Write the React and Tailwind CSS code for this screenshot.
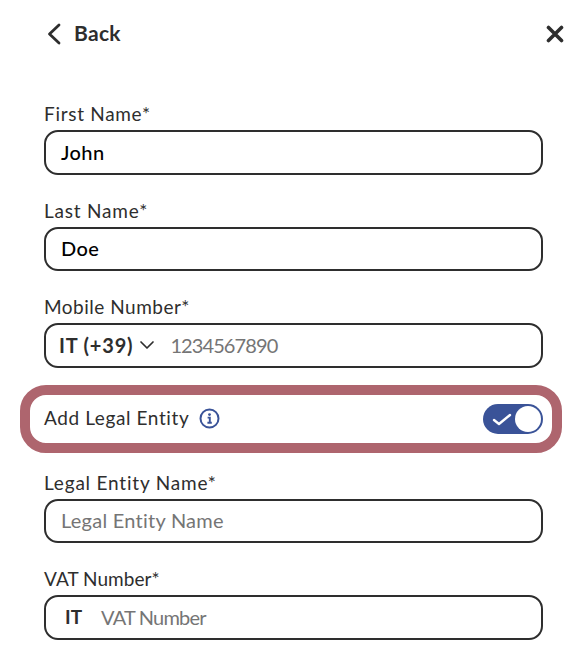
import React from "react";

const font = "font-['Lato','Noto_Sans',sans-serif]";

function Field({ label, spacing, children }) {
  return (
    <div className="flex flex-col">
      <label className={`h-[24px] text-[19px] leading-[24px] text-[#2e2e2e] ${spacing}`}>{label}</label>
      <div className="mt-[4px] flex h-[44.5px] items-center rounded-[14px] border-2 border-[#2e2e2e] bg-white pb-[1px]">
        {children}
      </div>
    </div>
  );
}

export default function App() {
  return (
    <div className={`h-[655px] w-[586px] overflow-hidden bg-white ${font}`}>
      <div className="flex h-[68px] items-center justify-between pl-[46px] pr-[22px]">
        <button className="flex items-center gap-[12px] text-[#2e2e2e]">
          <svg width="16" height="22" viewBox="0 0 16 22" fill="none" stroke="#2e2e2e" strokeWidth="2.8" strokeLinecap="round" strokeLinejoin="round">
            <path d="M13 2 3.5 11 13 20" />
          </svg>
          <span className="pb-[3px] text-[21px] font-bold leading-none tracking-[0.3px]">Back</span>
        </button>
        <svg width="18" height="18" viewBox="0 0 18 18" fill="none" stroke="#2e2e2e" strokeWidth="3.6" strokeLinecap="round">
          <path d="M2.5 2.5l13 13M15.5 2.5l-13 13" />
        </svg>
      </div>
      <div className="flex flex-col pt-[34px]">
        <div className="flex flex-col gap-[24px] pl-[44px] pr-[43px]">
          <Field label="First Name*" spacing="tracking-[0.7px]">
            <span className="pl-[15px] text-[20px] font-medium tracking-[0.4px] text-black">John</span>
          </Field>
          <Field label="Last Name*" spacing="tracking-[0.8px]">
            <span className="pl-[15px] text-[20px] font-medium tracking-[0.4px] text-black">Doe</span>
          </Field>
          <Field label="Mobile Number*" spacing="tracking-[0.5px]">
            <span className="pl-[13px] text-[20px] font-bold tracking-[0.8px] text-[#2e2e2e]">IT (+39)</span>
            <svg className="ml-[6px]" width="16" height="10" viewBox="0 0 16 10" fill="none" stroke="#2e2e2e" strokeWidth="1.7" strokeLinecap="round" strokeLinejoin="round">
              <path d="M2 2l6 6 6-6" />
            </svg>
            <span className="ml-[15px] text-[20px] tracking-[-0.9px] text-[#757575]">1234567890</span>
          </Field>
        </div>
        <div className="ml-[20px] mt-[17px] flex h-[68px] w-[542px] items-center justify-between rounded-[26px] border-[10px] border-[#ae656e] bg-white pl-[14px] pr-[9px]">
          <div className="flex items-center gap-[10px]">
            <span className="text-[19px] tracking-[0.6px] text-[#2e2e2e]">Add Legal Entity</span>
            <svg width="21" height="21" viewBox="0 0 21 21" fill="none">
              <circle cx="10.5" cy="10.5" r="9" stroke="#3a5398" strokeWidth="2" />
              <circle cx="10.5" cy="6.6" r="1.4" fill="#3a5398" />
              <path d="M8.6 9.6h2.2v5M8.4 14.8h4.4" stroke="#3a5398" strokeWidth="1.9" />
            </svg>
          </div>
          <div className="flex h-[30px] w-[60px] items-center justify-between rounded-full bg-[#3a5398] pl-[9px] pr-[2px]">
            <svg width="20" height="14" viewBox="0 0 20 14" fill="none" stroke="#ffffff" strokeWidth="2.4" strokeLinecap="round" strokeLinejoin="round">
              <path d="M2 8l5 4L18 3" />
            </svg>
            <div className="h-[26px] w-[26px] rounded-full bg-white" />
          </div>
        </div>
        <div className="mt-[18px] flex flex-col gap-[24px] pl-[44px] pr-[43px]">
          <Field label="Legal Entity Name*" spacing="tracking-[0.8px]">
            <span className="pl-[15px] text-[20px] tracking-[0.25px] text-[#757575]">Legal Entity Name</span>
          </Field>
          <Field label="VAT Number*" spacing="tracking-[0.05px]">
            <span className="pl-[19px] text-[19px] font-bold text-[#2e2e2e]">IT</span>
            <span className="ml-[19px] text-[20px] tracking-[-0.8px] text-[#757575]">VAT Number</span>
          </Field>
        </div>
      </div>
    </div>
  );
}
